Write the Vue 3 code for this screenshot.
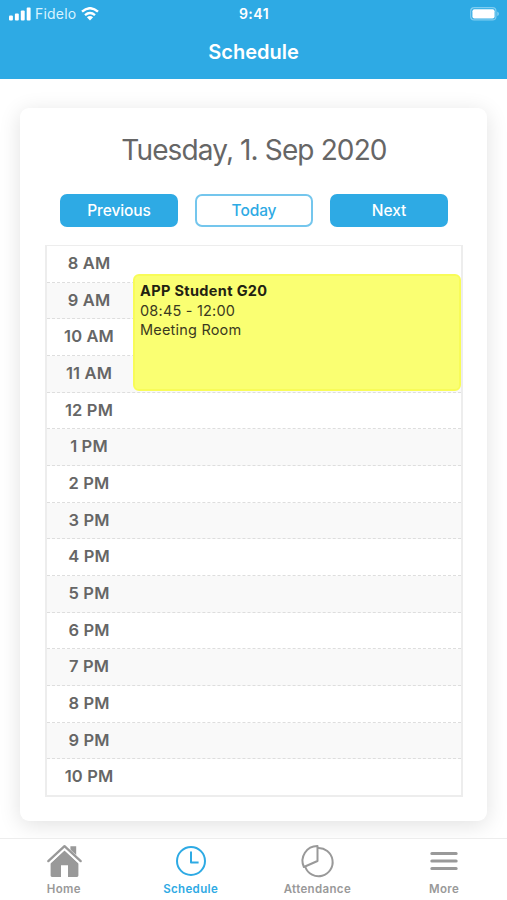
<template>
  <div class="app">

    <header class="top">
      <div class="status">
        <div class="carrier">
          <svg width="22" height="14" viewBox="0 0 22 14">
            <rect v-for="(h, i) in [5, 7, 10, 13]" :key="i" :x="i * 5.9" :y="13.5 - h" width="3.9" :height="h" rx="1" />
          </svg>
          <span>Fidelo</span>
          <svg class="wifi" width="18" height="14" viewBox="0 0 18 14">
            <path class="arc" d="M1 4.7Q9-2.3 17 4.7M4 8.1Q9 3.8 14 8.1" />
            <path d="M5.9 10.2Q9 7.8 12.1 10.2L9 13.5Z" />
          </svg>
        </div>
        <div class="time">9:41</div>
        <svg class="battery" width="30" height="14" viewBox="0 0 30 14">
          <rect class="shell" x=".7" y=".7" width="25.2" height="12.2" rx="3.5" />
          <rect x="2.4" y="2.2" width="22.2" height="9.2" rx="2" />
          <path class="tip" d="M27.2 4.5Q29 5.2 29 6.8Q29 8.4 27.2 9.1Z" />
        </svg>
      </div>
      <h1>Schedule</h1>
    </header>

    <main>
      <section class="card">
        <h2>Tuesday, 1. Sep 2020</h2>

        <div class="buttons">
          <button>Previous</button>
          <button class="outline">Today</button>
          <button>Next</button>
        </div>

        <div class="calendar">
          <div v-for="hour in hours" :key="hour" class="row">
            <div class="hour">{{ hour }}</div>
          </div>
          <div class="event">
            <b>APP Student G20</b>
            <span>08:45 - 12:00</span>
            <span>Meeting Room</span>
          </div>
        </div>
      </section>
    </main>

    <nav class="tabs">
      <a class="tab">
        <svg width="40" height="36" viewBox="0 0 40 36">
          <path class="solid" d="M26.4 3.3H32.2V12.6L26.4 7.2Z" />
          <path class="solid" d="M20.5 7.4L34.4 20.2V32.6Q34.4 34 33 34H24V22.2H17V34H8Q6.6 34 6.6 32.6V20.2Z" />
          <path class="roof-gap" d="M4.3 19.3L20.5 4.2L36.7 19.3" />
          <path class="roof" d="M4.3 18.1L20.5 3.2L36.7 18.1" />
        </svg>
        Home
      </a>
      <a class="tab active">
        <svg width="40" height="36" viewBox="0 0 40 36">
          <circle cx="20" cy="18" r="14" />
          <path d="M20 8.6V19.4H27.6" />
        </svg>
        Schedule
      </a>
      <a class="tab">
        <svg width="40" height="36" viewBox="0 0 40 36">
          <path d="M20.5 3A14.8 14.8 0 0 0 6.9 24L20.5 18Z" />
          <path d="M20.5 5.1A14.1 14.1 0 1 1 8.3 24" />
        </svg>
        Attendance
      </a>
      <a class="tab">
        <svg width="40" height="36" viewBox="0 0 40 36">
          <path class="bars" d="M7.9 10.5H32.1M7.9 18H32.1M7.9 25.5H32.1" />
        </svg>
        More
      </a>
    </nav>

  </div>
</template>

<script setup>
const hours = [
  '8 AM', '9 AM', '10 AM', '11 AM', '12 PM',
  '1 PM', '2 PM', '3 PM', '4 PM', '5 PM',
  '6 PM', '7 PM', '8 PM', '9 PM', '10 PM',
]
</script>

<style>
body { margin: 0; }
</style>

<style scoped>
.app {
  display: flex;
  flex-direction: column;
  height: 900px;
  overflow: hidden;
  background: #fff;
  font-family: Inter, sans-serif;
}

/* ── Header ── */
.top {
  height: 79px;
  flex: none;
  background: #2eaae4;
  color: #fff;
  text-align: center;
}

.status {
  display: grid;
  grid-template-columns: 1fr auto 1fr;
  align-items: center;
  height: 27px;
  padding: 0 7px 0 9px;
}

.status svg { fill: #fff; }

.carrier {
  display: flex;
  align-items: center;
  gap: 4px;
  font-size: 14px;
  letter-spacing: 0.2px;
  color: #d8f3ff;
}

.wifi { margin-left: 1px; }
.wifi .arc { fill: none; stroke: #fff; stroke-width: 2.4; }
.time { font-size: 14px; font-weight: 600; letter-spacing: 0.5px; padding-right: 1px; }
.battery { justify-self: end; }
.battery .shell { fill: none; stroke: #7fcdf0; stroke-width: 1.2; }
.battery .tip { fill: #7fcdf0; }

h1 {
  margin: 0;
  font-size: 20px;
  line-height: 51px;
  font-weight: 600;
}

/* ── Card ── */
main {
  flex: 1;
  min-height: 0;
  padding: 29px 20px 0;
}

.card {
  height: 713px;
  box-sizing: border-box;
  padding: 22px 24px 0 25px;
  border-radius: 9px;
  background: #fff;
  box-shadow: 0 4px 22px rgba(0, 0, 0, 0.12);
}

h2 {
  margin: 0;
  text-align: center;
  font-size: 28px;
  line-height: 40px;
  font-weight: 400;
  letter-spacing: -0.87px;
  color: #666;
}

.buttons {
  display: flex;
  gap: 17px;
  padding: 24px 15px 18px;
}

button {
  flex: 1;
  height: 33px;
  padding: 0;
  border: 2px solid #2eaae4;
  border-radius: 7px;
  background: #2eaae4;
  color: #fff;
  font: 500 15.5px Inter, sans-serif;
  letter-spacing: -0.1px;
}

button.outline { background: #fff; color: #2eaae4; border-color: #74c6ed; }

/* ── Calendar ── */
.calendar {
  position: relative;
  height: 552px;
  box-sizing: border-box;
  display: flex;
  flex-direction: column;
  border: 2px solid #ededed;
  border-top-width: 1px;
}

.row {
  flex: 1;
  display: flex;
  align-items: center;
  box-sizing: border-box;
  border-bottom: 1px dashed #dedede;
}

.row:nth-child(even) { background: #f9f9f9; }
.row:nth-child(15) { border-bottom: none; }

.hour {
  width: 84px;
  padding-bottom: 2px;
  text-align: center;
  font-size: 16.5px;
  font-weight: 600;
  letter-spacing: 0.15px;
  color: #666;
}

.event {
  position: absolute;
  top: 28px;
  left: 86px;
  right: 0;
  height: 117px;
  box-sizing: border-box;
  display: flex;
  flex-direction: column;
  padding: 5px;
  border: 2px solid #f8fc58;
  border-radius: 6px;
  background: #faff72;
  font-size: 14.5px;
  line-height: 19.5px;
  letter-spacing: 0.2px;
  color: #3a3a20;
}

.event b { font-weight: 700; letter-spacing: 0.35px; color: #222211; }

/* ── Tab bar ── */
.tabs {
  position: relative;
  flex: none;
  display: flex;
  height: 61px;
  border-top: 1px solid #ededed;
  background: #fff;
}

.tab {
  flex: 1;
  display: flex;
  flex-direction: column;
  align-items: center;
  padding: 4px 0 0 1px;
  font-size: 11.5px;
  line-height: 21px;
  font-weight: 600;
  letter-spacing: 0.35px;
  color: #999;
}

.tab svg { fill: none; stroke: #999; stroke-width: 2; stroke-linejoin: round; }
.tab.active { color: #2eaae4; }
.tab.active svg { stroke: #2eaae4; }
.tab .solid { fill: #999; stroke: none; }
.tab .roof-gap { stroke: #fff; stroke-width: 4.5; }
.tab .roof { stroke-width: 2.3; stroke-linecap: round; }
.tab .bars { stroke-width: 3.2; stroke-linecap: round; }
</style>
